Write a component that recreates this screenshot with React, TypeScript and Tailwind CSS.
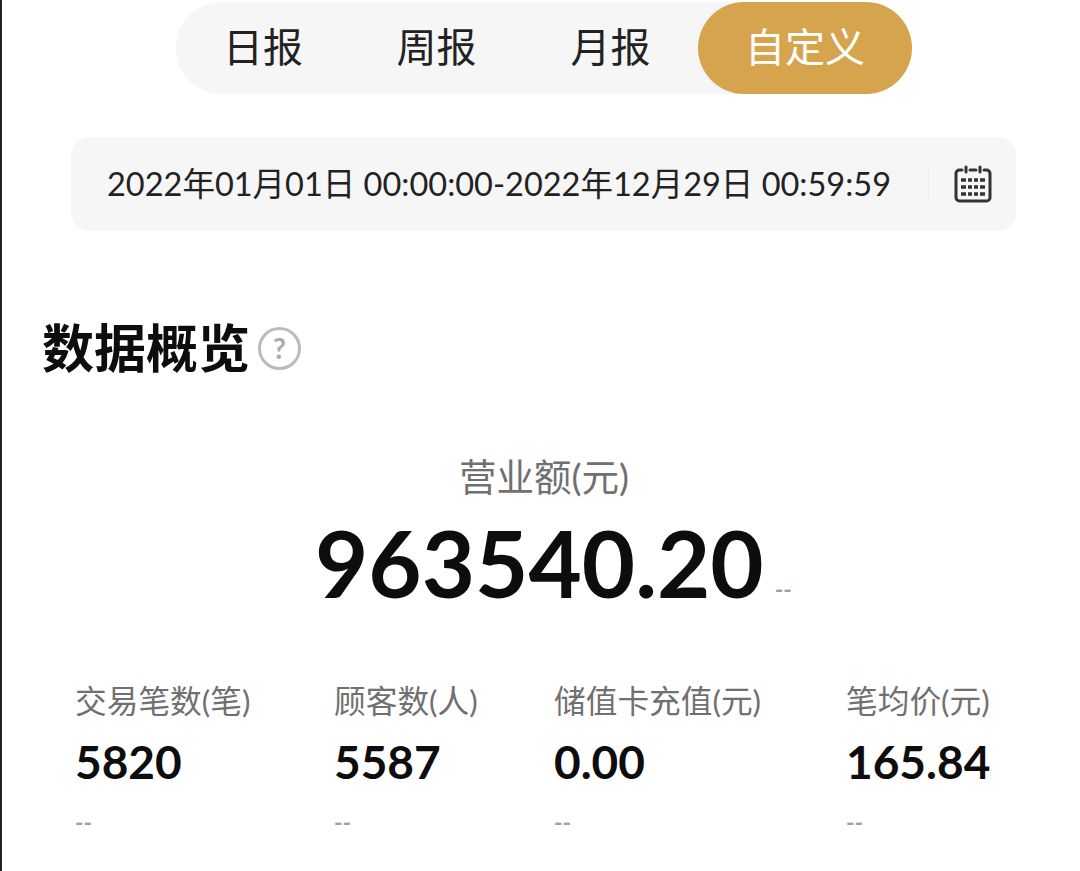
const cjk = "font-['Lato','Noto_Sans_CJK_SC',sans-serif]";

function Stat({ label, value, w }: { label: string; value: string; w: string }) {
  return (
    <div className={w}>
      <div className="text-[31.7px] leading-[36px] text-[#707070] whitespace-nowrap">{label}</div>
      <div className="mt-[17px] text-[46px] leading-[52px] font-bold text-[#0d0d0d]">{value}</div>
      <div className="mt-[25px] text-[23px] leading-[18px] font-bold text-[#a0a0a0]">--</div>
    </div>
  );
}

export default function App() {
  return (
    <div className={`${cjk} relative w-[1080px] h-[871px] overflow-hidden bg-white pt-[2px]`}>
      <div className="absolute left-0 top-0 h-full w-[2px] bg-[#222222]" />
      <div className="ml-[176px] flex h-[92px] w-[736px] items-center rounded-[46px] bg-[#f6f6f6] pb-[2px] text-[40px] leading-[48px] text-[#222222]">
        <div className="w-[174px] text-center">日报</div>
        <div className="w-[173px] text-center">周报</div>
        <div className="w-[175px] text-center">月报</div>
        <div className="mb-[-2px] flex h-[92px] w-[214px] items-center justify-center rounded-[46px] bg-[#d7a44e] pb-[2px] text-white">自定义</div>
      </div>
      <div className="ml-[71px] mt-[43px] flex h-[94px] w-[945px] items-center rounded-[18px] bg-[#f6f6f6] pl-[36px] pr-[24px]">
        <div className="whitespace-nowrap text-[32.5px] text-[#222222]">2022年01月01日 00:00:00-2022年12月29日 00:59:59</div>
        <div className="ml-auto flex items-center gap-[25px]">
          <div className="h-[32px] w-px bg-[#eeeeee]" />
          <svg width="38" height="38" viewBox="0 0 38 38" fill="none" stroke="#333333" strokeWidth="3" strokeLinecap="round">
            <path d="M8 5H5.5A3.5 3.5 0 0 0 2 8.5V32.5A3.5 3.5 0 0 0 5.5 36H32.5A3.5 3.5 0 0 0 36 32.5V8.5A3.5 3.5 0 0 0 32.5 5H30" />
            <path d="M12 2V7M26 2V7M16 5H22" />
            <path d="M7 15H12M14 15H18M20 15H24M26 15H31M7 22H12M14 22H18M20 22H24M26 22H31M7 29H12M14 29H18M20 29H24M26 29H31" strokeWidth="3.4" strokeLinecap="butt" />
          </svg>
        </div>
      </div>
      <div className="ml-[42px] mt-[82px] flex items-center">
        <div className="text-[52px] leading-[70px] font-bold text-[#0d0d0d]">数据概览</div>
        <div className="ml-[8px] flex h-[43px] w-[43px] items-center justify-center rounded-full border-[3px] border-[#bbbbbb] text-[28px] font-bold text-[#aaaaaa]">?</div>
      </div>
      <div className="mt-[72px] ml-[459px] text-[37.5px] leading-[44px] text-[#707070]">营业额(元)</div>
      <div className="mt-[14px] ml-[315px] flex items-end">
        <div className="text-[92px] leading-[100px] font-bold text-[#0d0d0d]">963540.20</div>
        <div className="ml-[11px] mb-[15px] text-[23px] leading-[18px] font-bold text-[#a0a0a0]">--</div>
      </div>
      <div className="ml-[75px] mt-[70px] flex">
        <Stat label="交易笔数(笔)" value="5820" w="w-[259px]" />
        <Stat label="顾客数(人)" value="5587" w="w-[220px]" />
        <Stat label="储值卡充值(元)" value="0.00" w="w-[292px]" />
        <Stat label="笔均价(元)" value="165.84" w="w-[150px]" />
      </div>
    </div>
  );
}
